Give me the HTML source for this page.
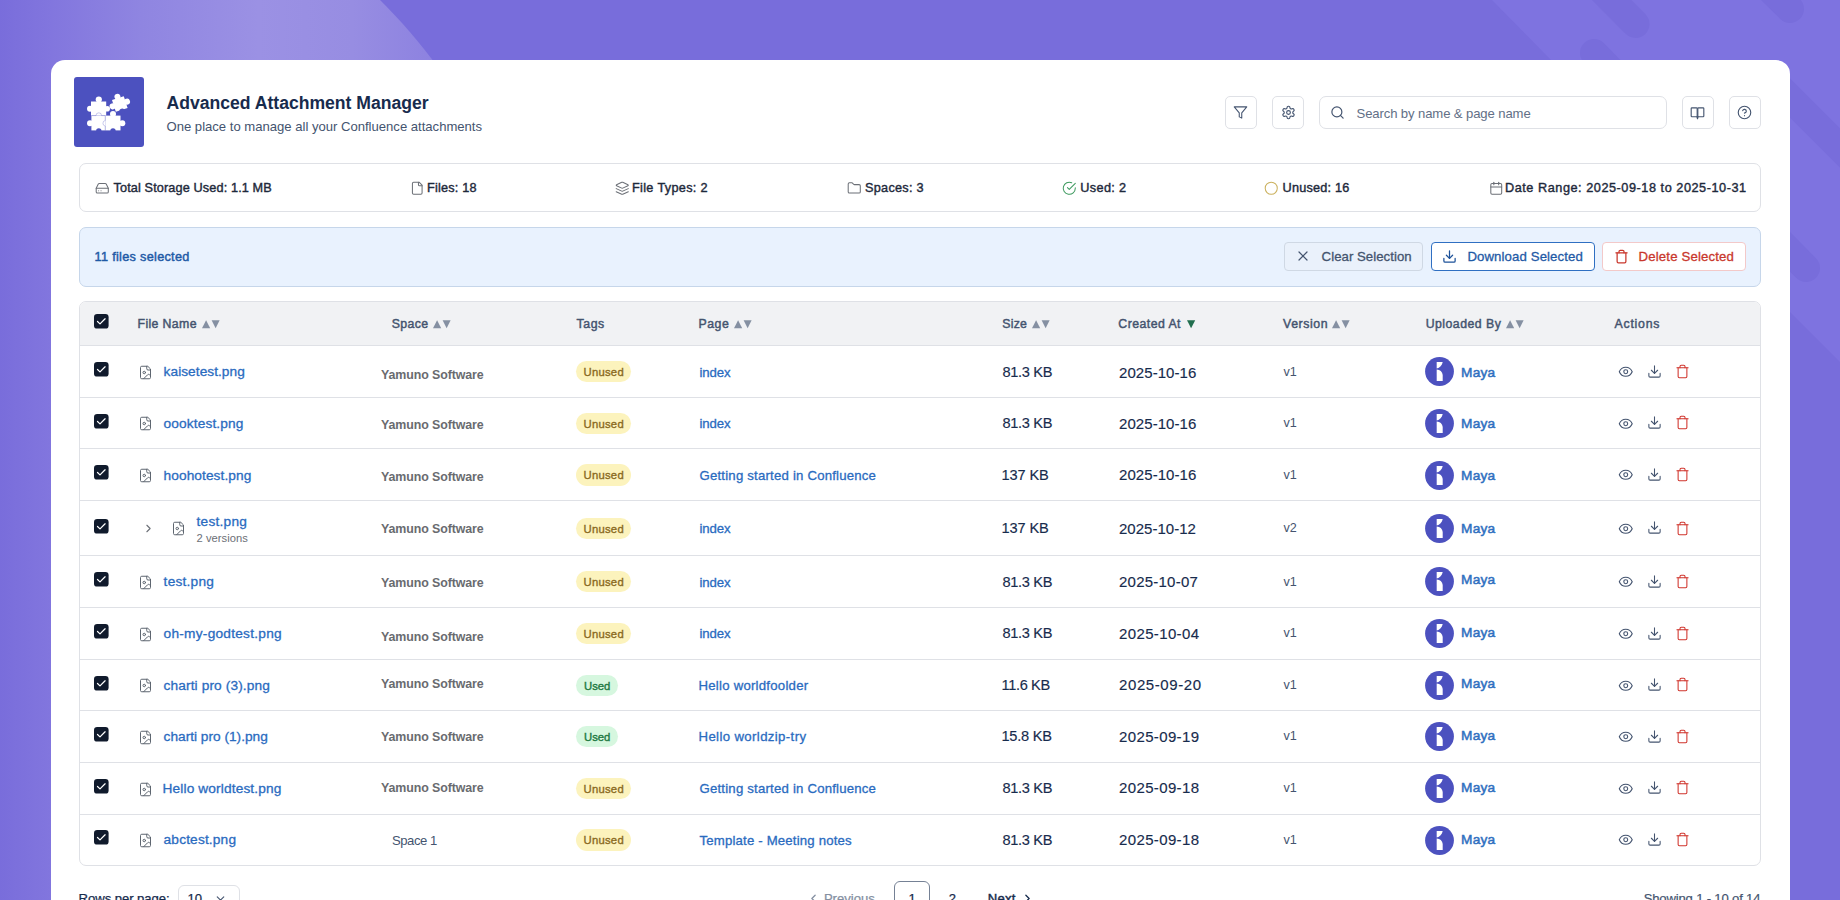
<!DOCTYPE html>
<html><head><meta charset="utf-8"><title>Advanced Attachment Manager</title>
<style>
html,body{margin:0;padding:0;width:1840px;height:900px;overflow:hidden;background:#786ddb;}
body{position:relative;font-family:"Liberation Sans", sans-serif;}
.t{position:absolute;white-space:nowrap;}
.b{position:absolute;}
.ic{position:absolute;overflow:visible;}
</style></head><body>
<svg class="ic" style="left:0;top:0" width="1840" height="900" viewBox="0 0 1840 900">
<defs>
<linearGradient id="lg" x1="0" y1="0" x2="470" y2="0" gradientUnits="userSpaceOnUse">
<stop offset="0" stop-color="#796ddb"/><stop offset="0.11" stop-color="#8276de"/><stop offset="0.3" stop-color="#8f85e1"/><stop offset="0.55" stop-color="#9b91e4"/><stop offset="0.75" stop-color="#978de2"/><stop offset="0.92" stop-color="#8d82e0"/><stop offset="1" stop-color="#8a7fdf"/>
</linearGradient>
</defs>
<rect width="1840" height="900" fill="#786ddb"/>
<path d="M0 0 H380 C400 20 418 40 440 70 L470 130 L60 900 L0 900 Z" fill="url(#lg)"/>
<path d="M1492 0 H1840 V362 L1790 312 L1551 60 Z" fill="#7e73e0"/>
<g stroke="#786ddb" stroke-width="28" stroke-linecap="round">
<line x1="1562" y1="-50" x2="1635.5" y2="24"/>
<line x1="1594" y1="53" x2="1806" y2="268"/>
<line x1="1700" y1="-80" x2="1790" y2="9"/>
<line x1="1766" y1="74" x2="1900" y2="208"/>
</g>
</svg>
<div class="b" style="left:51.00px;top:60.00px;width:1739.00px;height:900.00px;background:#fff;border-radius:14px 14px 0 0;"></div>
<div class="b" style="left:73.60px;top:76.50px;width:70.20px;height:70.00px;background:#4c51bf;border-radius:3px;"></div>
<svg class="ic" style="left:73.8px;top:76.5px" width="70" height="70" viewBox="0 0 70 70">
<g fill="#fff">
<rect x="17" y="24.5" width="15.2" height="14.1"/><circle cx="24.8" cy="22.6" r="3.1"/><circle cx="16" cy="31.8" r="3"/><circle cx="33.2" cy="31.8" r="2.8"/>
<rect x="17.4" y="38.6" width="13.8" height="14.8"/><circle cx="16" cy="46.2" r="3"/>
<rect x="31.2" y="38.6" width="15.3" height="14.8"/><circle cx="39" cy="37" r="3"/><circle cx="48.3" cy="46.2" r="3"/>
<g transform="rotate(-18 45.8 27)"><rect x="39.6" y="20.8" width="12.4" height="12.4"/><circle cx="45.8" cy="19.4" r="3"/><circle cx="53.4" cy="27" r="3"/><circle cx="38.2" cy="27" r="3"/></g>
</g>
<g fill="#4c51bf"><circle cx="24.8" cy="54" r="2.7"/><circle cx="39" cy="54" r="2.7"/><g transform="rotate(-18 45.8 27)"><circle cx="45.8" cy="34.6" r="2.7"/></g></g>
<g fill="none" stroke="#4c51bf" stroke-width="0.5" opacity="0.6"><path d="M17.4 38.6 H22 A2.8 2.8 0 0 1 27.6 38.6 H31.2 V43.5 A2.8 2.8 0 0 0 31.2 49 V53.4"/></g>
</svg>
<div class="t" style="left:166.60px;top:94.60px;font-size:17.6px;line-height:17.6px;color:#172b4d;font-weight:700;letter-spacing:-0.013px;">Advanced Attachment Manager</div>
<div class="t" style="left:166.50px;top:119.61px;font-size:13.1px;line-height:13.1px;color:#44546f;font-weight:400;letter-spacing:-0.007px;">One place to manage all your Confluence attachments</div>
<div class="b" style="left:1225.00px;top:96.00px;width:32.00px;height:32.50px;background:#fff;border:1px solid #dfe1e6;border-radius:5px;box-sizing:border-box;"></div>
<svg class="ic" style="left:1233.30px;top:105.20px;" width="15" height="15" viewBox="0 0 24 24" fill="none" stroke="#44546f" stroke-width="1.7" stroke-linecap="round" stroke-linejoin="round"><polygon points="22 3 2 3 10 12.46 10 19 14 21 14 12.46 22 3"/></svg>
<div class="b" style="left:1272.00px;top:96.00px;width:32.00px;height:32.50px;background:#fff;border:1px solid #dfe1e6;border-radius:5px;box-sizing:border-box;"></div>
<svg class="ic" style="left:1280.50px;top:104.50px;" width="15" height="15" viewBox="0 0 24 24" fill="none" stroke="#44546f" stroke-width="1.8" stroke-linecap="round" stroke-linejoin="round"><path d="M12.22 2h-.44a2 2 0 0 0-2 2v.18a2 2 0 0 1-1 1.73l-.43.25a2 2 0 0 1-2 0l-.15-.08a2 2 0 0 0-2.73.73l-.22.38a2 2 0 0 0 .73 2.73l.15.1a2 2 0 0 1 1 1.72v.51a2 2 0 0 1-1 1.74l-.15.09a2 2 0 0 0-.73 2.73l.22.38a2 2 0 0 0 2.73.73l.15-.08a2 2 0 0 1 2 0l.43.25a2 2 0 0 1 1 1.730V20a2 2 0 0 0 2 2h.44a2 2 0 0 0 2-2v-.18a2 2 0 0 1 1-1.73l.43-.25a2 2 0 0 1 2 0l.15.08a2 2 0 0 0 2.73-.73l.22-.39a2 2 0 0 0-.73-2.73l-.15-.08a2 2 0 0 1-1-1.74v-.5a2 2 0 0 1 1-1.74l.15-.09a2 2 0 0 0 .73-2.73l-.22-.38a2 2 0 0 0-2.73-.73l-.15.08a2 2 0 0 1-2 0l-.43-.25a2 2 0 0 1-1-1.73V4a2 2 0 0 0-2-2z"/><circle cx="12" cy="12" r="3"/></svg>
<div class="b" style="left:1319.00px;top:96.00px;width:347.50px;height:32.50px;background:#fff;border:1px solid #dfe1e6;border-radius:5px;box-sizing:border-box;border-radius:7px;"></div>
<svg class="ic" style="left:1329.60px;top:105.00px;" width="15" height="15" viewBox="0 0 24 24" fill="none" stroke="#44546f" stroke-width="1.9" stroke-linecap="round" stroke-linejoin="round"><circle cx="11" cy="11" r="8"/><path d="m21 21-4.3-4.3"/></svg>
<div class="t" style="left:1356.50px;top:106.71px;font-size:13.1px;line-height:13.1px;color:#626f86;font-weight:400;letter-spacing:-0.108px;">Search by name &amp; page name</div>
<div class="b" style="left:1682.00px;top:96.00px;width:32.00px;height:32.50px;background:#fff;border:1px solid #dfe1e6;border-radius:5px;box-sizing:border-box;"></div>
<svg class="ic" style="left:1690.30px;top:105.00px;color:#44546f;" width="15" height="15" viewBox="0 0 24 24" fill="none" stroke="#44546f" stroke-width="1.8" stroke-linecap="round" stroke-linejoin="round"><rect x="1.9" y="4.5" width="9.6" height="14.2" rx="1.2"/><rect x="12.5" y="4.5" width="9.6" height="14.2" rx="1.2"/><path d="M12 18.7 11.2 19.6 12 22 12.8 19.6Z" fill="currentColor"/></svg>
<div class="b" style="left:1729.00px;top:96.00px;width:32.00px;height:32.50px;background:#fff;border:1px solid #dfe1e6;border-radius:5px;box-sizing:border-box;"></div>
<svg class="ic" style="left:1737.10px;top:105.40px;" width="15" height="15" viewBox="0 0 24 24" fill="none" stroke="#44546f" stroke-width="1.8" stroke-linecap="round" stroke-linejoin="round"><circle cx="12" cy="12" r="10"/><path d="M9.09 9a3 3 0 0 1 5.83 1c0 2-3 3-3 3"/><path d="M12 17h.01"/></svg>
<div class="b" style="left:79.00px;top:163.00px;width:1682.00px;height:49.00px;border:1px solid #dfe1e6;border-radius:7px;box-sizing:border-box;"></div>
<svg class="ic" style="left:95.10px;top:180.50px;" width="14.5" height="14.5" viewBox="0 0 24 24" fill="none" stroke="#6b6f76" stroke-width="1.7" stroke-linecap="round" stroke-linejoin="round"><line x1="22" x2="2" y1="12" y2="12"/><path d="M5.45 5.11 2 12v6a2 2 0 0 0 2 2h16a2 2 0 0 0 2-2v-6l-3.45-6.89A2 2 0 0 0 16.76 4H7.24a2 2 0 0 0-1.79 1.11z"/><line x1="6" x2="6.01" y1="16" y2="16"/><line x1="10" x2="10.01" y1="16" y2="16"/></svg>
<div class="t" style="left:113.50px;top:182.15px;font-size:12.7px;line-height:12.7px;color:#1e293b;font-weight:400;letter-spacing:0.125px;-webkit-text-stroke:0.4px #1e293b;">Total Storage Used: 1.1 MB</div>
<svg class="ic" style="left:410.10px;top:180.50px;" width="14.5" height="14.5" viewBox="0 0 24 24" fill="none" stroke="#6b6f76" stroke-width="1.7" stroke-linecap="round" stroke-linejoin="round"><path d="M15 2H6a2 2 0 0 0-2 2v16a2 2 0 0 0 2 2h12a2 2 0 0 0 2-2V7Z"/><path d="M14 2v4a2 2 0 0 0 2 2h4"/></svg>
<div class="t" style="left:427.00px;top:182.15px;font-size:12.7px;line-height:12.7px;color:#1e293b;font-weight:400;letter-spacing:0.201px;-webkit-text-stroke:0.4px #1e293b;">Files: 18</div>
<svg class="ic" style="left:615.10px;top:180.50px;" width="14.5" height="14.5" viewBox="0 0 24 24" fill="none" stroke="#6b6f76" stroke-width="1.7" stroke-linecap="round" stroke-linejoin="round"><path d="m12.83 2.18a2 2 0 0 0-1.66 0L2.6 6.08a1 1 0 0 0 0 1.83l8.58 3.91a2 2 0 0 0 1.66 0l8.58-3.9a1 1 0 0 0 0-1.83Z"/><path d="m22 17.65-9.17 4.16a2 2 0 0 1-1.66 0L2 17.65"/><path d="m22 12.65-9.17 4.16a2 2 0 0 1-1.66 0L2 12.65"/></svg>
<div class="t" style="left:632.00px;top:182.15px;font-size:12.7px;line-height:12.7px;color:#1e293b;font-weight:400;letter-spacing:0.328px;-webkit-text-stroke:0.4px #1e293b;">File Types: 2</div>
<svg class="ic" style="left:846.60px;top:180.50px;" width="14.5" height="14.5" viewBox="0 0 24 24" fill="none" stroke="#6b6f76" stroke-width="1.7" stroke-linecap="round" stroke-linejoin="round"><path d="M20 20a2 2 0 0 0 2-2V8a2 2 0 0 0-2-2h-7.9a2 2 0 0 1-1.69-.9L9.6 3.9A2 2 0 0 0 7.93 3H4a2 2 0 0 0-2 2v13a2 2 0 0 0 2 2Z"/></svg>
<div class="t" style="left:865.00px;top:182.15px;font-size:12.7px;line-height:12.7px;color:#1e293b;font-weight:400;letter-spacing:0.279px;-webkit-text-stroke:0.4px #1e293b;">Spaces: 3</div>
<svg class="ic" style="left:1062.10px;top:180.50px;" width="14.5" height="14.5" viewBox="0 0 24 24" fill="none" stroke="#3e9a5f" stroke-width="1.7" stroke-linecap="round" stroke-linejoin="round"><path d="M22 11.08V12a10 10 0 1 1-5.93-9.14"/><path d="m9 11 3 3L22 4"/></svg>
<div class="t" style="left:1080.30px;top:182.15px;font-size:12.7px;line-height:12.7px;color:#1e293b;font-weight:400;letter-spacing:0.339px;-webkit-text-stroke:0.4px #1e293b;">Used: 2</div>
<svg class="ic" style="left:1264.10px;top:180.50px;" width="14.5" height="14.5" viewBox="0 0 24 24" fill="none" stroke="#cbb15e" stroke-width="1.7" stroke-linecap="round" stroke-linejoin="round"><circle cx="12" cy="12" r="10"/></svg>
<div class="t" style="left:1282.60px;top:182.15px;font-size:12.7px;line-height:12.7px;color:#1e293b;font-weight:400;letter-spacing:0.196px;-webkit-text-stroke:0.4px #1e293b;">Unused: 16</div>
<svg class="ic" style="left:1488.60px;top:180.50px;" width="14.5" height="14.5" viewBox="0 0 24 24" fill="none" stroke="#6b6f76" stroke-width="1.7" stroke-linecap="round" stroke-linejoin="round"><rect width="18" height="18" x="3" y="4" rx="2" ry="2"/><line x1="16" x2="16" y1="2" y2="6"/><line x1="8" x2="8" y1="2" y2="6"/><line x1="3" x2="21" y1="10" y2="10"/></svg>
<div class="t" style="left:1505.00px;top:182.15px;font-size:12.7px;line-height:12.7px;color:#1e293b;font-weight:400;letter-spacing:0.539px;-webkit-text-stroke:0.4px #1e293b;">Date Range: 2025-09-18 to 2025-10-31</div>
<div class="b" style="left:79.00px;top:227.00px;width:1682.00px;height:60.00px;background:#e9f2fe;border:1px solid #c6d6ea;border-radius:7px;box-sizing:border-box;"></div>
<div class="t" style="left:94.60px;top:251.05px;font-size:12.7px;line-height:12.7px;color:#1f5aa6;font-weight:400;letter-spacing:0.295px;-webkit-text-stroke:0.45px #1f5aa6;">11 files selected</div>
<div class="b" style="left:1284.00px;top:242.00px;width:139.00px;height:28.50px;background:#eaf1fb;border:1px solid #cfd8e4;border-radius:4px;box-sizing:border-box;"></div>
<svg class="ic" style="left:1294.60px;top:248.30px;" width="16" height="16" viewBox="0 0 24 24" fill="none" stroke="#44546f" stroke-width="1.8" stroke-linecap="round" stroke-linejoin="round"><path d="M18 6 6 18"/><path d="m6 6 12 12"/></svg>
<div class="t" style="left:1321.60px;top:249.83px;font-size:13.2px;line-height:13.2px;color:#44546f;font-weight:400;letter-spacing:0.043px;-webkit-text-stroke:0.3px #44546f;">Clear Selection</div>
<div class="b" style="left:1430.50px;top:242.00px;width:164.50px;height:28.50px;background:#fff;border:1px solid #2f6fc2;border-radius:4px;box-sizing:border-box;"></div>
<svg class="ic" style="left:1441.50px;top:249.00px;" width="15" height="15" viewBox="0 0 24 24" fill="none" stroke="#1d5199" stroke-width="2" stroke-linecap="round" stroke-linejoin="round"><path d="M21 15v4a2 2 0 0 1-2 2H5a2 2 0 0 1-2-2v-4"/><polyline points="7 10 12 15 17 10"/><line x1="12" x2="12" y1="15" y2="3"/></svg>
<div class="t" style="left:1467.40px;top:249.83px;font-size:13.2px;line-height:13.2px;color:#1f5aa6;font-weight:400;letter-spacing:0.113px;-webkit-text-stroke:0.3px #1f5aa6;">Download Selected</div>
<div class="b" style="left:1602.00px;top:242.00px;width:144.00px;height:28.50px;background:#fff;border:1px solid #f3c9c9;border-radius:4px;box-sizing:border-box;"></div>
<svg class="ic" style="left:1613.50px;top:249.00px;" width="15" height="15" viewBox="0 0 24 24" fill="none" stroke="#c9372c" stroke-width="2" stroke-linecap="round" stroke-linejoin="round"><path d="M3 6h18"/><path d="M19 6v14c0 1-1 2-2 2H7c-1 0-2-1-2-2V6"/><path d="M8 6V4c0-1 1-2 2-2h4c1 0 2 1 2 2v2"/></svg>
<div class="t" style="left:1638.60px;top:249.83px;font-size:13.2px;line-height:13.2px;color:#c9372c;font-weight:400;letter-spacing:0.159px;-webkit-text-stroke:0.3px #c9372c;">Delete Selected</div>
<div class="b" style="left:79.00px;top:301.00px;width:1682.00px;height:565.00px;border:1px solid #dfe1e6;border-radius:7px;box-sizing:border-box;overflow:hidden;"></div>
<div class="b" style="left:80.00px;top:302.00px;width:1680.00px;height:44.00px;background:#f1f2f4;border-radius:6px 6px 0 0;"></div>
<div class="b" style="left:80.00px;top:345.00px;width:1680.00px;height:1.00px;background:#dfe1e6;"></div>
<div class="b" style="left:80.00px;top:397.00px;width:1680.00px;height:1.00px;background:#dfe1e6;"></div>
<div class="b" style="left:80.00px;top:448.00px;width:1680.00px;height:1.00px;background:#dfe1e6;"></div>
<div class="b" style="left:80.00px;top:500.00px;width:1680.00px;height:1.00px;background:#dfe1e6;"></div>
<div class="b" style="left:80.00px;top:555.00px;width:1680.00px;height:1.00px;background:#dfe1e6;"></div>
<div class="b" style="left:80.00px;top:607.00px;width:1680.00px;height:1.00px;background:#dfe1e6;"></div>
<div class="b" style="left:80.00px;top:659.00px;width:1680.00px;height:1.00px;background:#dfe1e6;"></div>
<div class="b" style="left:80.00px;top:710.00px;width:1680.00px;height:1.00px;background:#dfe1e6;"></div>
<div class="b" style="left:80.00px;top:762.00px;width:1680.00px;height:1.00px;background:#dfe1e6;"></div>
<div class="b" style="left:80.00px;top:814.00px;width:1680.00px;height:1.00px;background:#dfe1e6;"></div>
<svg class="ic" style="left:94.4px;top:314px" width="15" height="15" viewBox="0 0 15 15"><rect x="0" y="0" width="14.6" height="14.6" rx="3.2" fill="#101a2c"/><path d="M3.5 7.5 6 9.9 11.1 4.8" fill="none" stroke="#fff" stroke-width="1.25" stroke-linecap="round" stroke-linejoin="round"/></svg>
<div class="t" style="left:137.50px;top:318.29px;font-size:12.3px;line-height:12.3px;color:#44546f;font-weight:400;letter-spacing:0.376px;-webkit-text-stroke:0.45px #44546f;">File Name</div>
<svg class="ic" style="left:201.6px;top:319.7px" width="19" height="9" viewBox="0 0 19 9"><path d="M4.1 0.2 8.2 8.2 H0 Z" fill="#8590a2"/><path d="M9.6 0.3 H17.6 L13.6 8.3 Z" fill="#8590a2"/></svg>
<div class="t" style="left:391.80px;top:318.29px;font-size:12.3px;line-height:12.3px;color:#44546f;font-weight:400;letter-spacing:0.368px;-webkit-text-stroke:0.45px #44546f;">Space</div>
<svg class="ic" style="left:433px;top:319.7px" width="19" height="9" viewBox="0 0 19 9"><path d="M4.1 0.2 8.2 8.2 H0 Z" fill="#8590a2"/><path d="M9.6 0.3 H17.6 L13.6 8.3 Z" fill="#8590a2"/></svg>
<div class="t" style="left:576.60px;top:318.29px;font-size:12.3px;line-height:12.3px;color:#44546f;font-weight:400;letter-spacing:0.525px;-webkit-text-stroke:0.45px #44546f;">Tags</div>
<div class="t" style="left:698.50px;top:318.29px;font-size:12.3px;line-height:12.3px;color:#44546f;font-weight:400;letter-spacing:0.540px;-webkit-text-stroke:0.45px #44546f;">Page</div>
<svg class="ic" style="left:733.7px;top:319.7px" width="19" height="9" viewBox="0 0 19 9"><path d="M4.1 0.2 8.2 8.2 H0 Z" fill="#8590a2"/><path d="M9.6 0.3 H17.6 L13.6 8.3 Z" fill="#8590a2"/></svg>
<div class="t" style="left:1002.30px;top:318.29px;font-size:12.3px;line-height:12.3px;color:#44546f;font-weight:400;letter-spacing:0.206px;-webkit-text-stroke:0.45px #44546f;">Size</div>
<svg class="ic" style="left:1031.6px;top:319.7px" width="19" height="9" viewBox="0 0 19 9"><path d="M4.1 0.2 8.2 8.2 H0 Z" fill="#8590a2"/><path d="M9.6 0.3 H17.6 L13.6 8.3 Z" fill="#8590a2"/></svg>
<div class="t" style="left:1118.30px;top:318.29px;font-size:12.3px;line-height:12.3px;color:#44546f;font-weight:400;letter-spacing:0.459px;-webkit-text-stroke:0.45px #44546f;">Created At</div>
<div class="t" style="left:1283.00px;top:318.29px;font-size:12.3px;line-height:12.3px;color:#44546f;font-weight:400;letter-spacing:0.604px;-webkit-text-stroke:0.45px #44546f;">Version</div>
<svg class="ic" style="left:1332.2px;top:319.7px" width="19" height="9" viewBox="0 0 19 9"><path d="M4.1 0.2 8.2 8.2 H0 Z" fill="#8590a2"/><path d="M9.6 0.3 H17.6 L13.6 8.3 Z" fill="#8590a2"/></svg>
<div class="t" style="left:1425.70px;top:318.29px;font-size:12.3px;line-height:12.3px;color:#44546f;font-weight:400;letter-spacing:0.474px;-webkit-text-stroke:0.45px #44546f;">Uploaded By</div>
<svg class="ic" style="left:1506.1px;top:319.7px" width="19" height="9" viewBox="0 0 19 9"><path d="M4.1 0.2 8.2 8.2 H0 Z" fill="#8590a2"/><path d="M9.6 0.3 H17.6 L13.6 8.3 Z" fill="#8590a2"/></svg>
<div class="t" style="left:1614.60px;top:318.29px;font-size:12.3px;line-height:12.3px;color:#44546f;font-weight:400;letter-spacing:0.754px;-webkit-text-stroke:0.45px #44546f;">Actions</div>
<svg class="ic" style="left:1186.7px;top:319.7px" width="9" height="9" viewBox="0 0 9 9"><path d="M0 0.3 H8.2 L4.1 8.2 Z" fill="#216e4e"/></svg>
<svg class="ic" style="left:94.4px;top:361.8px" width="15" height="15" viewBox="0 0 15 15"><rect x="0" y="0" width="14.6" height="14.6" rx="3.2" fill="#101a2c"/><path d="M3.5 7.5 6 9.9 11.1 4.8" fill="none" stroke="#fff" stroke-width="1.25" stroke-linecap="round" stroke-linejoin="round"/></svg>
<svg class="ic" style="left:138.20px;top:364.70px;" width="15" height="15" viewBox="0 0 24 24" fill="none" stroke="#5e6670" stroke-width="1.6" stroke-linecap="round" stroke-linejoin="round"><path d="M15 2H6a2 2 0 0 0-2 2v16a2 2 0 0 0 2 2h12a2 2 0 0 0 2-2V7Z"/><path d="M14 2v4a2 2 0 0 0 2 2h4"/><circle cx="10" cy="12" r="2"/><path d="m20 17-1.296-1.296a2.41 2.41 0 0 0-3.408 0L9 22"/></svg>
<div class="t" style="left:163.60px;top:365.30px;font-size:13.7px;line-height:13.7px;color:#2a6bbf;font-weight:400;letter-spacing:0.046px;-webkit-text-stroke:0.3px #2a6bbf;">kaisetest.png</div>
<div class="t" style="left:381.00px;top:369.20px;font-size:12.4px;line-height:12.4px;color:#696b6f;font-weight:700;letter-spacing:-0.091px;">Yamuno Software</div>
<div class="b" style="left:576.00px;top:360.90px;width:54.50px;height:21.20px;background:#fcf3bd;border-radius:11px;"></div>
<div class="t" style="left:583.50px;top:366.93px;font-size:11.3px;line-height:11.3px;color:#8a6a1f;font-weight:400;letter-spacing:0.249px;-webkit-text-stroke:0.35px #8a6a1f;">Unused</div>
<div class="t" style="left:699.50px;top:366.23px;font-size:13.2px;line-height:13.2px;color:#2a6bbf;font-weight:400;letter-spacing:-0.108px;-webkit-text-stroke:0.3px #2a6bbf;">index</div>
<div class="t" style="left:1002.50px;top:365.04px;font-size:14.6px;line-height:14.6px;color:#172b4d;font-weight:400;letter-spacing:-0.332px;-webkit-text-stroke:0.15px #172b4d;">81.3 KB</div>
<div class="t" style="left:1119.00px;top:364.70px;font-size:15px;line-height:15px;color:#172b4d;font-weight:400;letter-spacing:0.068px;-webkit-text-stroke:0.15px #172b4d;">2025-10-16</div>
<div class="t" style="left:1283.50px;top:366.13px;font-size:12.6px;line-height:12.6px;color:#44546f;font-weight:400;">v1</div>
<svg class="ic" style="left:1425.3px;top:357.10px" width="29" height="29" viewBox="0 0 29 29"><circle cx="14.5" cy="14.5" r="14.4" fill="#4c51bf"/><path d="M11.7 4.9 H17.7 C17 8.4 14.8 10.8 11.7 11.6 Z" fill="#fff"/><path d="M11.7 12.6 C15 12.9 17.3 14.8 17.7 18 V24 H11.7 Z" fill="#fff"/></svg>
<div class="t" style="left:1461.00px;top:365.80px;font-size:13.7px;line-height:13.7px;color:#2f6fc0;font-weight:400;letter-spacing:0.247px;-webkit-text-stroke:0.5px #2f6fc0;">Maya</div>
<svg class="ic" style="left:1617.80px;top:363.90px;" width="15.5" height="15.5" viewBox="0 0 24 24" fill="none" stroke="#44546f" stroke-width="1.7" stroke-linecap="round" stroke-linejoin="round"><path d="M2 12s3-7 10-7 10 7 10 7-3 7-10 7-10-7-10-7Z"/><circle cx="12" cy="12" r="3"/></svg>
<svg class="ic" style="left:1646.60px;top:363.50px;" width="15" height="15" viewBox="0 0 24 24" fill="none" stroke="#44546f" stroke-width="1.7" stroke-linecap="round" stroke-linejoin="round"><path d="M21 15v4a2 2 0 0 1-2 2H5a2 2 0 0 1-2-2v-4"/><polyline points="7 10 12 15 17 10"/><line x1="12" x2="12" y1="15" y2="3"/></svg>
<svg class="ic" style="left:1675.30px;top:363.60px;" width="15" height="15" viewBox="0 0 24 24" fill="none" stroke="#d0342c" stroke-width="1.7" stroke-linecap="round" stroke-linejoin="round"><path d="M3 6h18"/><path d="M19 6v14c0 1-1 2-2 2H7c-1 0-2-1-2-2V6"/><path d="M8 6V4c0-1 1-2 2-2h4c1 0 2 1 2 2v2"/></svg>
<svg class="ic" style="left:94.4px;top:413.5px" width="15" height="15" viewBox="0 0 15 15"><rect x="0" y="0" width="14.6" height="14.6" rx="3.2" fill="#101a2c"/><path d="M3.5 7.5 6 9.9 11.1 4.8" fill="none" stroke="#fff" stroke-width="1.25" stroke-linecap="round" stroke-linejoin="round"/></svg>
<svg class="ic" style="left:138.20px;top:416.40px;" width="15" height="15" viewBox="0 0 24 24" fill="none" stroke="#5e6670" stroke-width="1.6" stroke-linecap="round" stroke-linejoin="round"><path d="M15 2H6a2 2 0 0 0-2 2v16a2 2 0 0 0 2 2h12a2 2 0 0 0 2-2V7Z"/><path d="M14 2v4a2 2 0 0 0 2 2h4"/><circle cx="10" cy="12" r="2"/><path d="m20 17-1.296-1.296a2.41 2.41 0 0 0-3.408 0L9 22"/></svg>
<div class="t" style="left:163.60px;top:417.10px;font-size:13.7px;line-height:13.7px;color:#2a6bbf;font-weight:400;letter-spacing:0.121px;-webkit-text-stroke:0.3px #2a6bbf;">oooktest.png</div>
<div class="t" style="left:381.00px;top:419.30px;font-size:12.4px;line-height:12.4px;color:#696b6f;font-weight:700;letter-spacing:-0.091px;">Yamuno Software</div>
<div class="b" style="left:576.00px;top:412.60px;width:54.50px;height:21.20px;background:#fcf3bd;border-radius:11px;"></div>
<div class="t" style="left:583.50px;top:418.63px;font-size:11.3px;line-height:11.3px;color:#8a6a1f;font-weight:400;letter-spacing:0.249px;-webkit-text-stroke:0.35px #8a6a1f;">Unused</div>
<div class="t" style="left:699.50px;top:417.43px;font-size:13.2px;line-height:13.2px;color:#2a6bbf;font-weight:400;letter-spacing:-0.108px;-webkit-text-stroke:0.3px #2a6bbf;">index</div>
<div class="t" style="left:1002.50px;top:416.24px;font-size:14.6px;line-height:14.6px;color:#172b4d;font-weight:400;letter-spacing:-0.332px;-webkit-text-stroke:0.15px #172b4d;">81.3 KB</div>
<div class="t" style="left:1119.00px;top:415.90px;font-size:15px;line-height:15px;color:#172b4d;font-weight:400;letter-spacing:0.068px;-webkit-text-stroke:0.15px #172b4d;">2025-10-16</div>
<div class="t" style="left:1283.50px;top:417.33px;font-size:12.6px;line-height:12.6px;color:#44546f;font-weight:400;">v1</div>
<svg class="ic" style="left:1425.3px;top:408.80px" width="29" height="29" viewBox="0 0 29 29"><circle cx="14.5" cy="14.5" r="14.4" fill="#4c51bf"/><path d="M11.7 4.9 H17.7 C17 8.4 14.8 10.8 11.7 11.6 Z" fill="#fff"/><path d="M11.7 12.6 C15 12.9 17.3 14.8 17.7 18 V24 H11.7 Z" fill="#fff"/></svg>
<div class="t" style="left:1461.00px;top:417.30px;font-size:13.7px;line-height:13.7px;color:#2f6fc0;font-weight:400;letter-spacing:0.247px;-webkit-text-stroke:0.5px #2f6fc0;">Maya</div>
<svg class="ic" style="left:1617.80px;top:415.60px;" width="15.5" height="15.5" viewBox="0 0 24 24" fill="none" stroke="#44546f" stroke-width="1.7" stroke-linecap="round" stroke-linejoin="round"><path d="M2 12s3-7 10-7 10 7 10 7-3 7-10 7-10-7-10-7Z"/><circle cx="12" cy="12" r="3"/></svg>
<svg class="ic" style="left:1646.60px;top:415.20px;" width="15" height="15" viewBox="0 0 24 24" fill="none" stroke="#44546f" stroke-width="1.7" stroke-linecap="round" stroke-linejoin="round"><path d="M21 15v4a2 2 0 0 1-2 2H5a2 2 0 0 1-2-2v-4"/><polyline points="7 10 12 15 17 10"/><line x1="12" x2="12" y1="15" y2="3"/></svg>
<svg class="ic" style="left:1675.30px;top:415.30px;" width="15" height="15" viewBox="0 0 24 24" fill="none" stroke="#d0342c" stroke-width="1.7" stroke-linecap="round" stroke-linejoin="round"><path d="M3 6h18"/><path d="M19 6v14c0 1-1 2-2 2H7c-1 0-2-1-2-2V6"/><path d="M8 6V4c0-1 1-2 2-2h4c1 0 2 1 2 2v2"/></svg>
<svg class="ic" style="left:94.4px;top:465.3px" width="15" height="15" viewBox="0 0 15 15"><rect x="0" y="0" width="14.6" height="14.6" rx="3.2" fill="#101a2c"/><path d="M3.5 7.5 6 9.9 11.1 4.8" fill="none" stroke="#fff" stroke-width="1.25" stroke-linecap="round" stroke-linejoin="round"/></svg>
<svg class="ic" style="left:138.20px;top:468.20px;" width="15" height="15" viewBox="0 0 24 24" fill="none" stroke="#5e6670" stroke-width="1.6" stroke-linecap="round" stroke-linejoin="round"><path d="M15 2H6a2 2 0 0 0-2 2v16a2 2 0 0 0 2 2h12a2 2 0 0 0 2-2V7Z"/><path d="M14 2v4a2 2 0 0 0 2 2h4"/><circle cx="10" cy="12" r="2"/><path d="m20 17-1.296-1.296a2.41 2.41 0 0 0-3.408 0L9 22"/></svg>
<div class="t" style="left:163.60px;top:468.60px;font-size:13.7px;line-height:13.7px;color:#2a6bbf;font-weight:400;letter-spacing:0.079px;-webkit-text-stroke:0.3px #2a6bbf;">hoohotest.png</div>
<div class="t" style="left:381.00px;top:470.80px;font-size:12.4px;line-height:12.4px;color:#696b6f;font-weight:700;letter-spacing:-0.091px;">Yamuno Software</div>
<div class="b" style="left:576.00px;top:464.40px;width:54.50px;height:21.20px;background:#fcf3bd;border-radius:11px;"></div>
<div class="t" style="left:583.50px;top:470.43px;font-size:11.3px;line-height:11.3px;color:#8a6a1f;font-weight:400;letter-spacing:0.249px;-webkit-text-stroke:0.35px #8a6a1f;">Unused</div>
<div class="t" style="left:699.50px;top:468.93px;font-size:13.2px;line-height:13.2px;color:#2a6bbf;font-weight:400;letter-spacing:0.201px;-webkit-text-stroke:0.3px #2a6bbf;">Getting started in Confluence</div>
<div class="t" style="left:1001.50px;top:467.74px;font-size:14.6px;line-height:14.6px;color:#172b4d;font-weight:400;letter-spacing:-0.128px;-webkit-text-stroke:0.15px #172b4d;">137 KB</div>
<div class="t" style="left:1119.00px;top:467.40px;font-size:15px;line-height:15px;color:#172b4d;font-weight:400;letter-spacing:0.068px;-webkit-text-stroke:0.15px #172b4d;">2025-10-16</div>
<div class="t" style="left:1283.50px;top:468.83px;font-size:12.6px;line-height:12.6px;color:#44546f;font-weight:400;">v1</div>
<svg class="ic" style="left:1425.3px;top:460.60px" width="29" height="29" viewBox="0 0 29 29"><circle cx="14.5" cy="14.5" r="14.4" fill="#4c51bf"/><path d="M11.7 4.9 H17.7 C17 8.4 14.8 10.8 11.7 11.6 Z" fill="#fff"/><path d="M11.7 12.6 C15 12.9 17.3 14.8 17.7 18 V24 H11.7 Z" fill="#fff"/></svg>
<div class="t" style="left:1461.00px;top:468.80px;font-size:13.7px;line-height:13.7px;color:#2f6fc0;font-weight:400;letter-spacing:0.247px;-webkit-text-stroke:0.5px #2f6fc0;">Maya</div>
<svg class="ic" style="left:1617.80px;top:467.40px;" width="15.5" height="15.5" viewBox="0 0 24 24" fill="none" stroke="#44546f" stroke-width="1.7" stroke-linecap="round" stroke-linejoin="round"><path d="M2 12s3-7 10-7 10 7 10 7-3 7-10 7-10-7-10-7Z"/><circle cx="12" cy="12" r="3"/></svg>
<svg class="ic" style="left:1646.60px;top:467.00px;" width="15" height="15" viewBox="0 0 24 24" fill="none" stroke="#44546f" stroke-width="1.7" stroke-linecap="round" stroke-linejoin="round"><path d="M21 15v4a2 2 0 0 1-2 2H5a2 2 0 0 1-2-2v-4"/><polyline points="7 10 12 15 17 10"/><line x1="12" x2="12" y1="15" y2="3"/></svg>
<svg class="ic" style="left:1675.30px;top:467.10px;" width="15" height="15" viewBox="0 0 24 24" fill="none" stroke="#d0342c" stroke-width="1.7" stroke-linecap="round" stroke-linejoin="round"><path d="M3 6h18"/><path d="M19 6v14c0 1-1 2-2 2H7c-1 0-2-1-2-2V6"/><path d="M8 6V4c0-1 1-2 2-2h4c1 0 2 1 2 2v2"/></svg>
<svg class="ic" style="left:94.4px;top:518.7px" width="15" height="15" viewBox="0 0 15 15"><rect x="0" y="0" width="14.6" height="14.6" rx="3.2" fill="#101a2c"/><path d="M3.5 7.5 6 9.9 11.1 4.8" fill="none" stroke="#fff" stroke-width="1.25" stroke-linecap="round" stroke-linejoin="round"/></svg>
<svg class="ic" style="left:142.20px;top:522.10px;" width="13" height="13" viewBox="0 0 24 24" fill="none" stroke="#6b6f76" stroke-width="2" stroke-linecap="round" stroke-linejoin="round"><path d="m9 18 6-6-6-6"/></svg>
<svg class="ic" style="left:171.00px;top:521.00px;" width="15" height="15" viewBox="0 0 24 24" fill="none" stroke="#5e6670" stroke-width="1.6" stroke-linecap="round" stroke-linejoin="round"><path d="M15 2H6a2 2 0 0 0-2 2v16a2 2 0 0 0 2 2h12a2 2 0 0 0 2-2V7Z"/><path d="M14 2v4a2 2 0 0 0 2 2h4"/><circle cx="10" cy="12" r="2"/><path d="m20 17-1.296-1.296a2.41 2.41 0 0 0-3.408 0L9 22"/></svg>
<div class="t" style="left:196.50px;top:514.80px;font-size:13.7px;line-height:13.7px;color:#2a6bbf;font-weight:400;letter-spacing:0.244px;-webkit-text-stroke:0.3px #2a6bbf;">test.png</div>
<div class="t" style="left:196.50px;top:532.92px;font-size:11.2px;line-height:11.2px;color:#6b6f76;font-weight:400;letter-spacing:0.045px;">2 versions</div>
<div class="t" style="left:381.00px;top:522.90px;font-size:12.4px;line-height:12.4px;color:#696b6f;font-weight:700;letter-spacing:-0.091px;">Yamuno Software</div>
<div class="b" style="left:576.00px;top:517.80px;width:54.50px;height:21.20px;background:#fcf3bd;border-radius:11px;"></div>
<div class="t" style="left:583.50px;top:523.83px;font-size:11.3px;line-height:11.3px;color:#8a6a1f;font-weight:400;letter-spacing:0.249px;-webkit-text-stroke:0.35px #8a6a1f;">Unused</div>
<div class="t" style="left:699.50px;top:522.23px;font-size:13.2px;line-height:13.2px;color:#2a6bbf;font-weight:400;letter-spacing:-0.108px;-webkit-text-stroke:0.3px #2a6bbf;">index</div>
<div class="t" style="left:1001.50px;top:521.04px;font-size:14.6px;line-height:14.6px;color:#172b4d;font-weight:400;letter-spacing:-0.128px;-webkit-text-stroke:0.15px #172b4d;">137 KB</div>
<div class="t" style="left:1119.00px;top:520.70px;font-size:15px;line-height:15px;color:#172b4d;font-weight:400;letter-spacing:0.013px;-webkit-text-stroke:0.15px #172b4d;">2025-10-12</div>
<div class="t" style="left:1283.50px;top:522.13px;font-size:12.6px;line-height:12.6px;color:#44546f;font-weight:400;">v2</div>
<svg class="ic" style="left:1425.3px;top:514.00px" width="29" height="29" viewBox="0 0 29 29"><circle cx="14.5" cy="14.5" r="14.4" fill="#4c51bf"/><path d="M11.7 4.9 H17.7 C17 8.4 14.8 10.8 11.7 11.6 Z" fill="#fff"/><path d="M11.7 12.6 C15 12.9 17.3 14.8 17.7 18 V24 H11.7 Z" fill="#fff"/></svg>
<div class="t" style="left:1461.00px;top:521.80px;font-size:13.7px;line-height:13.7px;color:#2f6fc0;font-weight:400;letter-spacing:0.247px;-webkit-text-stroke:0.5px #2f6fc0;">Maya</div>
<svg class="ic" style="left:1617.80px;top:520.80px;" width="15.5" height="15.5" viewBox="0 0 24 24" fill="none" stroke="#44546f" stroke-width="1.7" stroke-linecap="round" stroke-linejoin="round"><path d="M2 12s3-7 10-7 10 7 10 7-3 7-10 7-10-7-10-7Z"/><circle cx="12" cy="12" r="3"/></svg>
<svg class="ic" style="left:1646.60px;top:520.40px;" width="15" height="15" viewBox="0 0 24 24" fill="none" stroke="#44546f" stroke-width="1.7" stroke-linecap="round" stroke-linejoin="round"><path d="M21 15v4a2 2 0 0 1-2 2H5a2 2 0 0 1-2-2v-4"/><polyline points="7 10 12 15 17 10"/><line x1="12" x2="12" y1="15" y2="3"/></svg>
<svg class="ic" style="left:1675.30px;top:520.50px;" width="15" height="15" viewBox="0 0 24 24" fill="none" stroke="#d0342c" stroke-width="1.7" stroke-linecap="round" stroke-linejoin="round"><path d="M3 6h18"/><path d="M19 6v14c0 1-1 2-2 2H7c-1 0-2-1-2-2V6"/><path d="M8 6V4c0-1 1-2 2-2h4c1 0 2 1 2 2v2"/></svg>
<svg class="ic" style="left:94.4px;top:571.9px" width="15" height="15" viewBox="0 0 15 15"><rect x="0" y="0" width="14.6" height="14.6" rx="3.2" fill="#101a2c"/><path d="M3.5 7.5 6 9.9 11.1 4.8" fill="none" stroke="#fff" stroke-width="1.25" stroke-linecap="round" stroke-linejoin="round"/></svg>
<svg class="ic" style="left:138.20px;top:574.80px;" width="15" height="15" viewBox="0 0 24 24" fill="none" stroke="#5e6670" stroke-width="1.6" stroke-linecap="round" stroke-linejoin="round"><path d="M15 2H6a2 2 0 0 0-2 2v16a2 2 0 0 0 2 2h12a2 2 0 0 0 2-2V7Z"/><path d="M14 2v4a2 2 0 0 0 2 2h4"/><circle cx="10" cy="12" r="2"/><path d="m20 17-1.296-1.296a2.41 2.41 0 0 0-3.408 0L9 22"/></svg>
<div class="t" style="left:163.60px;top:575.20px;font-size:13.7px;line-height:13.7px;color:#2a6bbf;font-weight:400;letter-spacing:0.230px;-webkit-text-stroke:0.3px #2a6bbf;">test.png</div>
<div class="t" style="left:381.00px;top:576.80px;font-size:12.4px;line-height:12.4px;color:#696b6f;font-weight:700;letter-spacing:-0.091px;">Yamuno Software</div>
<div class="b" style="left:576.00px;top:571.00px;width:54.50px;height:21.20px;background:#fcf3bd;border-radius:11px;"></div>
<div class="t" style="left:583.50px;top:577.03px;font-size:11.3px;line-height:11.3px;color:#8a6a1f;font-weight:400;letter-spacing:0.249px;-webkit-text-stroke:0.35px #8a6a1f;">Unused</div>
<div class="t" style="left:699.50px;top:575.83px;font-size:13.2px;line-height:13.2px;color:#2a6bbf;font-weight:400;letter-spacing:-0.108px;-webkit-text-stroke:0.3px #2a6bbf;">index</div>
<div class="t" style="left:1002.50px;top:574.64px;font-size:14.6px;line-height:14.6px;color:#172b4d;font-weight:400;letter-spacing:-0.332px;-webkit-text-stroke:0.15px #172b4d;">81.3 KB</div>
<div class="t" style="left:1119.00px;top:574.30px;font-size:15px;line-height:15px;color:#172b4d;font-weight:400;letter-spacing:0.235px;-webkit-text-stroke:0.15px #172b4d;">2025-10-07</div>
<div class="t" style="left:1283.50px;top:575.73px;font-size:12.6px;line-height:12.6px;color:#44546f;font-weight:400;">v1</div>
<svg class="ic" style="left:1425.3px;top:567.20px" width="29" height="29" viewBox="0 0 29 29"><circle cx="14.5" cy="14.5" r="14.4" fill="#4c51bf"/><path d="M11.7 4.9 H17.7 C17 8.4 14.8 10.8 11.7 11.6 Z" fill="#fff"/><path d="M11.7 12.6 C15 12.9 17.3 14.8 17.7 18 V24 H11.7 Z" fill="#fff"/></svg>
<div class="t" style="left:1461.00px;top:573.30px;font-size:13.7px;line-height:13.7px;color:#2f6fc0;font-weight:400;letter-spacing:0.247px;-webkit-text-stroke:0.5px #2f6fc0;">Maya</div>
<svg class="ic" style="left:1617.80px;top:574.00px;" width="15.5" height="15.5" viewBox="0 0 24 24" fill="none" stroke="#44546f" stroke-width="1.7" stroke-linecap="round" stroke-linejoin="round"><path d="M2 12s3-7 10-7 10 7 10 7-3 7-10 7-10-7-10-7Z"/><circle cx="12" cy="12" r="3"/></svg>
<svg class="ic" style="left:1646.60px;top:573.60px;" width="15" height="15" viewBox="0 0 24 24" fill="none" stroke="#44546f" stroke-width="1.7" stroke-linecap="round" stroke-linejoin="round"><path d="M21 15v4a2 2 0 0 1-2 2H5a2 2 0 0 1-2-2v-4"/><polyline points="7 10 12 15 17 10"/><line x1="12" x2="12" y1="15" y2="3"/></svg>
<svg class="ic" style="left:1675.30px;top:573.70px;" width="15" height="15" viewBox="0 0 24 24" fill="none" stroke="#d0342c" stroke-width="1.7" stroke-linecap="round" stroke-linejoin="round"><path d="M3 6h18"/><path d="M19 6v14c0 1-1 2-2 2H7c-1 0-2-1-2-2V6"/><path d="M8 6V4c0-1 1-2 2-2h4c1 0 2 1 2 2v2"/></svg>
<svg class="ic" style="left:94.4px;top:623.8px" width="15" height="15" viewBox="0 0 15 15"><rect x="0" y="0" width="14.6" height="14.6" rx="3.2" fill="#101a2c"/><path d="M3.5 7.5 6 9.9 11.1 4.8" fill="none" stroke="#fff" stroke-width="1.25" stroke-linecap="round" stroke-linejoin="round"/></svg>
<svg class="ic" style="left:138.20px;top:626.70px;" width="15" height="15" viewBox="0 0 24 24" fill="none" stroke="#5e6670" stroke-width="1.6" stroke-linecap="round" stroke-linejoin="round"><path d="M15 2H6a2 2 0 0 0-2 2v16a2 2 0 0 0 2 2h12a2 2 0 0 0 2-2V7Z"/><path d="M14 2v4a2 2 0 0 0 2 2h4"/><circle cx="10" cy="12" r="2"/><path d="m20 17-1.296-1.296a2.41 2.41 0 0 0-3.408 0L9 22"/></svg>
<div class="t" style="left:163.60px;top:627.10px;font-size:13.7px;line-height:13.7px;color:#2a6bbf;font-weight:400;letter-spacing:0.243px;-webkit-text-stroke:0.3px #2a6bbf;">oh-my-godtest.png</div>
<div class="t" style="left:381.00px;top:631.30px;font-size:12.4px;line-height:12.4px;color:#696b6f;font-weight:700;letter-spacing:-0.091px;">Yamuno Software</div>
<div class="b" style="left:576.00px;top:622.90px;width:54.50px;height:21.20px;background:#fcf3bd;border-radius:11px;"></div>
<div class="t" style="left:583.50px;top:628.93px;font-size:11.3px;line-height:11.3px;color:#8a6a1f;font-weight:400;letter-spacing:0.249px;-webkit-text-stroke:0.35px #8a6a1f;">Unused</div>
<div class="t" style="left:699.50px;top:627.43px;font-size:13.2px;line-height:13.2px;color:#2a6bbf;font-weight:400;letter-spacing:-0.108px;-webkit-text-stroke:0.3px #2a6bbf;">index</div>
<div class="t" style="left:1002.50px;top:626.24px;font-size:14.6px;line-height:14.6px;color:#172b4d;font-weight:400;letter-spacing:-0.332px;-webkit-text-stroke:0.15px #172b4d;">81.3 KB</div>
<div class="t" style="left:1119.00px;top:625.90px;font-size:15px;line-height:15px;color:#172b4d;font-weight:400;letter-spacing:0.368px;-webkit-text-stroke:0.15px #172b4d;">2025-10-04</div>
<div class="t" style="left:1283.50px;top:627.33px;font-size:12.6px;line-height:12.6px;color:#44546f;font-weight:400;">v1</div>
<svg class="ic" style="left:1425.3px;top:619.10px" width="29" height="29" viewBox="0 0 29 29"><circle cx="14.5" cy="14.5" r="14.4" fill="#4c51bf"/><path d="M11.7 4.9 H17.7 C17 8.4 14.8 10.8 11.7 11.6 Z" fill="#fff"/><path d="M11.7 12.6 C15 12.9 17.3 14.8 17.7 18 V24 H11.7 Z" fill="#fff"/></svg>
<div class="t" style="left:1461.00px;top:625.80px;font-size:13.7px;line-height:13.7px;color:#2f6fc0;font-weight:400;letter-spacing:0.247px;-webkit-text-stroke:0.5px #2f6fc0;">Maya</div>
<svg class="ic" style="left:1617.80px;top:625.90px;" width="15.5" height="15.5" viewBox="0 0 24 24" fill="none" stroke="#44546f" stroke-width="1.7" stroke-linecap="round" stroke-linejoin="round"><path d="M2 12s3-7 10-7 10 7 10 7-3 7-10 7-10-7-10-7Z"/><circle cx="12" cy="12" r="3"/></svg>
<svg class="ic" style="left:1646.60px;top:625.50px;" width="15" height="15" viewBox="0 0 24 24" fill="none" stroke="#44546f" stroke-width="1.7" stroke-linecap="round" stroke-linejoin="round"><path d="M21 15v4a2 2 0 0 1-2 2H5a2 2 0 0 1-2-2v-4"/><polyline points="7 10 12 15 17 10"/><line x1="12" x2="12" y1="15" y2="3"/></svg>
<svg class="ic" style="left:1675.30px;top:625.60px;" width="15" height="15" viewBox="0 0 24 24" fill="none" stroke="#d0342c" stroke-width="1.7" stroke-linecap="round" stroke-linejoin="round"><path d="M3 6h18"/><path d="M19 6v14c0 1-1 2-2 2H7c-1 0-2-1-2-2V6"/><path d="M8 6V4c0-1 1-2 2-2h4c1 0 2 1 2 2v2"/></svg>
<svg class="ic" style="left:94.4px;top:675.5px" width="15" height="15" viewBox="0 0 15 15"><rect x="0" y="0" width="14.6" height="14.6" rx="3.2" fill="#101a2c"/><path d="M3.5 7.5 6 9.9 11.1 4.8" fill="none" stroke="#fff" stroke-width="1.25" stroke-linecap="round" stroke-linejoin="round"/></svg>
<svg class="ic" style="left:138.20px;top:678.40px;" width="15" height="15" viewBox="0 0 24 24" fill="none" stroke="#5e6670" stroke-width="1.6" stroke-linecap="round" stroke-linejoin="round"><path d="M15 2H6a2 2 0 0 0-2 2v16a2 2 0 0 0 2 2h12a2 2 0 0 0 2-2V7Z"/><path d="M14 2v4a2 2 0 0 0 2 2h4"/><circle cx="10" cy="12" r="2"/><path d="m20 17-1.296-1.296a2.41 2.41 0 0 0-3.408 0L9 22"/></svg>
<div class="t" style="left:163.60px;top:678.60px;font-size:13.7px;line-height:13.7px;color:#2a6bbf;font-weight:400;letter-spacing:0.117px;-webkit-text-stroke:0.3px #2a6bbf;">charti pro (3).png</div>
<div class="t" style="left:381.00px;top:677.80px;font-size:12.4px;line-height:12.4px;color:#696b6f;font-weight:700;letter-spacing:-0.091px;">Yamuno Software</div>
<div class="b" style="left:576.00px;top:674.60px;width:42.00px;height:21.20px;background:#d6f7df;border-radius:11px;"></div>
<div class="t" style="left:584.10px;top:680.63px;font-size:11.3px;line-height:11.3px;color:#1f7a43;font-weight:400;letter-spacing:-0.063px;-webkit-text-stroke:0.4px #1f7a43;">Used</div>
<div class="t" style="left:698.50px;top:678.93px;font-size:13.2px;line-height:13.2px;color:#2a6bbf;font-weight:400;letter-spacing:0.238px;-webkit-text-stroke:0.3px #2a6bbf;">Hello worldfoolder</div>
<div class="t" style="left:1001.50px;top:677.74px;font-size:14.6px;line-height:14.6px;color:#172b4d;font-weight:400;letter-spacing:-0.351px;-webkit-text-stroke:0.15px #172b4d;">11.6 KB</div>
<div class="t" style="left:1119.00px;top:677.40px;font-size:15px;line-height:15px;color:#172b4d;font-weight:400;letter-spacing:0.602px;-webkit-text-stroke:0.15px #172b4d;">2025-09-20</div>
<div class="t" style="left:1283.50px;top:678.83px;font-size:12.6px;line-height:12.6px;color:#44546f;font-weight:400;">v1</div>
<svg class="ic" style="left:1425.3px;top:670.80px" width="29" height="29" viewBox="0 0 29 29"><circle cx="14.5" cy="14.5" r="14.4" fill="#4c51bf"/><path d="M11.7 4.9 H17.7 C17 8.4 14.8 10.8 11.7 11.6 Z" fill="#fff"/><path d="M11.7 12.6 C15 12.9 17.3 14.8 17.7 18 V24 H11.7 Z" fill="#fff"/></svg>
<div class="t" style="left:1461.00px;top:677.30px;font-size:13.7px;line-height:13.7px;color:#2f6fc0;font-weight:400;letter-spacing:0.247px;-webkit-text-stroke:0.5px #2f6fc0;">Maya</div>
<svg class="ic" style="left:1617.80px;top:677.60px;" width="15.5" height="15.5" viewBox="0 0 24 24" fill="none" stroke="#44546f" stroke-width="1.7" stroke-linecap="round" stroke-linejoin="round"><path d="M2 12s3-7 10-7 10 7 10 7-3 7-10 7-10-7-10-7Z"/><circle cx="12" cy="12" r="3"/></svg>
<svg class="ic" style="left:1646.60px;top:677.20px;" width="15" height="15" viewBox="0 0 24 24" fill="none" stroke="#44546f" stroke-width="1.7" stroke-linecap="round" stroke-linejoin="round"><path d="M21 15v4a2 2 0 0 1-2 2H5a2 2 0 0 1-2-2v-4"/><polyline points="7 10 12 15 17 10"/><line x1="12" x2="12" y1="15" y2="3"/></svg>
<svg class="ic" style="left:1675.30px;top:677.30px;" width="15" height="15" viewBox="0 0 24 24" fill="none" stroke="#d0342c" stroke-width="1.7" stroke-linecap="round" stroke-linejoin="round"><path d="M3 6h18"/><path d="M19 6v14c0 1-1 2-2 2H7c-1 0-2-1-2-2V6"/><path d="M8 6V4c0-1 1-2 2-2h4c1 0 2 1 2 2v2"/></svg>
<svg class="ic" style="left:94.4px;top:726.9px" width="15" height="15" viewBox="0 0 15 15"><rect x="0" y="0" width="14.6" height="14.6" rx="3.2" fill="#101a2c"/><path d="M3.5 7.5 6 9.9 11.1 4.8" fill="none" stroke="#fff" stroke-width="1.25" stroke-linecap="round" stroke-linejoin="round"/></svg>
<svg class="ic" style="left:138.20px;top:729.80px;" width="15" height="15" viewBox="0 0 24 24" fill="none" stroke="#5e6670" stroke-width="1.6" stroke-linecap="round" stroke-linejoin="round"><path d="M15 2H6a2 2 0 0 0-2 2v16a2 2 0 0 0 2 2h12a2 2 0 0 0 2-2V7Z"/><path d="M14 2v4a2 2 0 0 0 2 2h4"/><circle cx="10" cy="12" r="2"/><path d="m20 17-1.296-1.296a2.41 2.41 0 0 0-3.408 0L9 22"/></svg>
<div class="t" style="left:163.60px;top:730.10px;font-size:13.7px;line-height:13.7px;color:#2a6bbf;font-weight:400;-webkit-text-stroke:0.3px #2a6bbf;">charti pro (1).png</div>
<div class="t" style="left:381.00px;top:730.50px;font-size:12.4px;line-height:12.4px;color:#696b6f;font-weight:700;letter-spacing:-0.091px;">Yamuno Software</div>
<div class="b" style="left:576.00px;top:726.00px;width:42.00px;height:21.20px;background:#d6f7df;border-radius:11px;"></div>
<div class="t" style="left:584.10px;top:732.03px;font-size:11.3px;line-height:11.3px;color:#1f7a43;font-weight:400;letter-spacing:-0.063px;-webkit-text-stroke:0.4px #1f7a43;">Used</div>
<div class="t" style="left:698.50px;top:730.43px;font-size:13.2px;line-height:13.2px;color:#2a6bbf;font-weight:400;letter-spacing:0.374px;-webkit-text-stroke:0.3px #2a6bbf;">Hello worldzip-try</div>
<div class="t" style="left:1001.50px;top:729.24px;font-size:14.6px;line-height:14.6px;color:#172b4d;font-weight:400;letter-spacing:-0.249px;-webkit-text-stroke:0.15px #172b4d;">15.8 KB</div>
<div class="t" style="left:1119.00px;top:728.90px;font-size:15px;line-height:15px;color:#172b4d;font-weight:400;letter-spacing:0.368px;-webkit-text-stroke:0.15px #172b4d;">2025-09-19</div>
<div class="t" style="left:1283.50px;top:730.33px;font-size:12.6px;line-height:12.6px;color:#44546f;font-weight:400;">v1</div>
<svg class="ic" style="left:1425.3px;top:722.20px" width="29" height="29" viewBox="0 0 29 29"><circle cx="14.5" cy="14.5" r="14.4" fill="#4c51bf"/><path d="M11.7 4.9 H17.7 C17 8.4 14.8 10.8 11.7 11.6 Z" fill="#fff"/><path d="M11.7 12.6 C15 12.9 17.3 14.8 17.7 18 V24 H11.7 Z" fill="#fff"/></svg>
<div class="t" style="left:1461.00px;top:728.80px;font-size:13.7px;line-height:13.7px;color:#2f6fc0;font-weight:400;letter-spacing:0.247px;-webkit-text-stroke:0.5px #2f6fc0;">Maya</div>
<svg class="ic" style="left:1617.80px;top:729.00px;" width="15.5" height="15.5" viewBox="0 0 24 24" fill="none" stroke="#44546f" stroke-width="1.7" stroke-linecap="round" stroke-linejoin="round"><path d="M2 12s3-7 10-7 10 7 10 7-3 7-10 7-10-7-10-7Z"/><circle cx="12" cy="12" r="3"/></svg>
<svg class="ic" style="left:1646.60px;top:728.60px;" width="15" height="15" viewBox="0 0 24 24" fill="none" stroke="#44546f" stroke-width="1.7" stroke-linecap="round" stroke-linejoin="round"><path d="M21 15v4a2 2 0 0 1-2 2H5a2 2 0 0 1-2-2v-4"/><polyline points="7 10 12 15 17 10"/><line x1="12" x2="12" y1="15" y2="3"/></svg>
<svg class="ic" style="left:1675.30px;top:728.70px;" width="15" height="15" viewBox="0 0 24 24" fill="none" stroke="#d0342c" stroke-width="1.7" stroke-linecap="round" stroke-linejoin="round"><path d="M3 6h18"/><path d="M19 6v14c0 1-1 2-2 2H7c-1 0-2-1-2-2V6"/><path d="M8 6V4c0-1 1-2 2-2h4c1 0 2 1 2 2v2"/></svg>
<svg class="ic" style="left:94.4px;top:778.6px" width="15" height="15" viewBox="0 0 15 15"><rect x="0" y="0" width="14.6" height="14.6" rx="3.2" fill="#101a2c"/><path d="M3.5 7.5 6 9.9 11.1 4.8" fill="none" stroke="#fff" stroke-width="1.25" stroke-linecap="round" stroke-linejoin="round"/></svg>
<svg class="ic" style="left:138.20px;top:781.50px;" width="15" height="15" viewBox="0 0 24 24" fill="none" stroke="#5e6670" stroke-width="1.6" stroke-linecap="round" stroke-linejoin="round"><path d="M15 2H6a2 2 0 0 0-2 2v16a2 2 0 0 0 2 2h12a2 2 0 0 0 2-2V7Z"/><path d="M14 2v4a2 2 0 0 0 2 2h4"/><circle cx="10" cy="12" r="2"/><path d="m20 17-1.296-1.296a2.41 2.41 0 0 0-3.408 0L9 22"/></svg>
<div class="t" style="left:162.60px;top:781.60px;font-size:13.7px;line-height:13.7px;color:#2a6bbf;font-weight:400;letter-spacing:0.128px;-webkit-text-stroke:0.3px #2a6bbf;">Hello worldtest.png</div>
<div class="t" style="left:381.00px;top:782.30px;font-size:12.4px;line-height:12.4px;color:#696b6f;font-weight:700;letter-spacing:-0.091px;">Yamuno Software</div>
<div class="b" style="left:576.00px;top:777.70px;width:54.50px;height:21.20px;background:#fcf3bd;border-radius:11px;"></div>
<div class="t" style="left:583.50px;top:783.73px;font-size:11.3px;line-height:11.3px;color:#8a6a1f;font-weight:400;letter-spacing:0.249px;-webkit-text-stroke:0.35px #8a6a1f;">Unused</div>
<div class="t" style="left:699.50px;top:781.93px;font-size:13.2px;line-height:13.2px;color:#2a6bbf;font-weight:400;letter-spacing:0.201px;-webkit-text-stroke:0.3px #2a6bbf;">Getting started in Confluence</div>
<div class="t" style="left:1002.50px;top:780.74px;font-size:14.6px;line-height:14.6px;color:#172b4d;font-weight:400;letter-spacing:-0.332px;-webkit-text-stroke:0.15px #172b4d;">81.3 KB</div>
<div class="t" style="left:1119.00px;top:780.40px;font-size:15px;line-height:15px;color:#172b4d;font-weight:400;letter-spacing:0.368px;-webkit-text-stroke:0.15px #172b4d;">2025-09-18</div>
<div class="t" style="left:1283.50px;top:781.83px;font-size:12.6px;line-height:12.6px;color:#44546f;font-weight:400;">v1</div>
<svg class="ic" style="left:1425.3px;top:773.90px" width="29" height="29" viewBox="0 0 29 29"><circle cx="14.5" cy="14.5" r="14.4" fill="#4c51bf"/><path d="M11.7 4.9 H17.7 C17 8.4 14.8 10.8 11.7 11.6 Z" fill="#fff"/><path d="M11.7 12.6 C15 12.9 17.3 14.8 17.7 18 V24 H11.7 Z" fill="#fff"/></svg>
<div class="t" style="left:1461.00px;top:781.20px;font-size:13.7px;line-height:13.7px;color:#2f6fc0;font-weight:400;letter-spacing:0.247px;-webkit-text-stroke:0.5px #2f6fc0;">Maya</div>
<svg class="ic" style="left:1617.80px;top:780.70px;" width="15.5" height="15.5" viewBox="0 0 24 24" fill="none" stroke="#44546f" stroke-width="1.7" stroke-linecap="round" stroke-linejoin="round"><path d="M2 12s3-7 10-7 10 7 10 7-3 7-10 7-10-7-10-7Z"/><circle cx="12" cy="12" r="3"/></svg>
<svg class="ic" style="left:1646.60px;top:780.30px;" width="15" height="15" viewBox="0 0 24 24" fill="none" stroke="#44546f" stroke-width="1.7" stroke-linecap="round" stroke-linejoin="round"><path d="M21 15v4a2 2 0 0 1-2 2H5a2 2 0 0 1-2-2v-4"/><polyline points="7 10 12 15 17 10"/><line x1="12" x2="12" y1="15" y2="3"/></svg>
<svg class="ic" style="left:1675.30px;top:780.40px;" width="15" height="15" viewBox="0 0 24 24" fill="none" stroke="#d0342c" stroke-width="1.7" stroke-linecap="round" stroke-linejoin="round"><path d="M3 6h18"/><path d="M19 6v14c0 1-1 2-2 2H7c-1 0-2-1-2-2V6"/><path d="M8 6V4c0-1 1-2 2-2h4c1 0 2 1 2 2v2"/></svg>
<svg class="ic" style="left:94.4px;top:830.3px" width="15" height="15" viewBox="0 0 15 15"><rect x="0" y="0" width="14.6" height="14.6" rx="3.2" fill="#101a2c"/><path d="M3.5 7.5 6 9.9 11.1 4.8" fill="none" stroke="#fff" stroke-width="1.25" stroke-linecap="round" stroke-linejoin="round"/></svg>
<svg class="ic" style="left:138.20px;top:833.20px;" width="15" height="15" viewBox="0 0 24 24" fill="none" stroke="#5e6670" stroke-width="1.6" stroke-linecap="round" stroke-linejoin="round"><path d="M15 2H6a2 2 0 0 0-2 2v16a2 2 0 0 0 2 2h12a2 2 0 0 0 2-2V7Z"/><path d="M14 2v4a2 2 0 0 0 2 2h4"/><circle cx="10" cy="12" r="2"/><path d="m20 17-1.296-1.296a2.41 2.41 0 0 0-3.408 0L9 22"/></svg>
<div class="t" style="left:163.60px;top:833.10px;font-size:13.7px;line-height:13.7px;color:#2a6bbf;font-weight:400;letter-spacing:0.164px;-webkit-text-stroke:0.3px #2a6bbf;">abctest.png</div>
<div class="t" style="left:392.00px;top:833.91px;font-size:13.1px;line-height:13.1px;color:#44546f;font-weight:400;letter-spacing:-0.461px;">Space 1</div>
<div class="b" style="left:576.00px;top:829.40px;width:54.50px;height:21.20px;background:#fcf3bd;border-radius:11px;"></div>
<div class="t" style="left:583.50px;top:835.43px;font-size:11.3px;line-height:11.3px;color:#8a6a1f;font-weight:400;letter-spacing:0.249px;-webkit-text-stroke:0.35px #8a6a1f;">Unused</div>
<div class="t" style="left:699.50px;top:833.73px;font-size:13.2px;line-height:13.2px;color:#2a6bbf;font-weight:400;letter-spacing:0.175px;-webkit-text-stroke:0.3px #2a6bbf;">Template - Meeting notes</div>
<div class="t" style="left:1002.50px;top:832.54px;font-size:14.6px;line-height:14.6px;color:#172b4d;font-weight:400;letter-spacing:-0.332px;-webkit-text-stroke:0.15px #172b4d;">81.3 KB</div>
<div class="t" style="left:1119.00px;top:832.20px;font-size:15px;line-height:15px;color:#172b4d;font-weight:400;letter-spacing:0.368px;-webkit-text-stroke:0.15px #172b4d;">2025-09-18</div>
<div class="t" style="left:1283.50px;top:833.63px;font-size:12.6px;line-height:12.6px;color:#44546f;font-weight:400;">v1</div>
<svg class="ic" style="left:1425.3px;top:825.60px" width="29" height="29" viewBox="0 0 29 29"><circle cx="14.5" cy="14.5" r="14.4" fill="#4c51bf"/><path d="M11.7 4.9 H17.7 C17 8.4 14.8 10.8 11.7 11.6 Z" fill="#fff"/><path d="M11.7 12.6 C15 12.9 17.3 14.8 17.7 18 V24 H11.7 Z" fill="#fff"/></svg>
<div class="t" style="left:1461.00px;top:832.70px;font-size:13.7px;line-height:13.7px;color:#2f6fc0;font-weight:400;letter-spacing:0.247px;-webkit-text-stroke:0.5px #2f6fc0;">Maya</div>
<svg class="ic" style="left:1617.80px;top:832.40px;" width="15.5" height="15.5" viewBox="0 0 24 24" fill="none" stroke="#44546f" stroke-width="1.7" stroke-linecap="round" stroke-linejoin="round"><path d="M2 12s3-7 10-7 10 7 10 7-3 7-10 7-10-7-10-7Z"/><circle cx="12" cy="12" r="3"/></svg>
<svg class="ic" style="left:1646.60px;top:832.00px;" width="15" height="15" viewBox="0 0 24 24" fill="none" stroke="#44546f" stroke-width="1.7" stroke-linecap="round" stroke-linejoin="round"><path d="M21 15v4a2 2 0 0 1-2 2H5a2 2 0 0 1-2-2v-4"/><polyline points="7 10 12 15 17 10"/><line x1="12" x2="12" y1="15" y2="3"/></svg>
<svg class="ic" style="left:1675.30px;top:832.10px;" width="15" height="15" viewBox="0 0 24 24" fill="none" stroke="#d0342c" stroke-width="1.7" stroke-linecap="round" stroke-linejoin="round"><path d="M3 6h18"/><path d="M19 6v14c0 1-1 2-2 2H7c-1 0-2-1-2-2V6"/><path d="M8 6V4c0-1 1-2 2-2h4c1 0 2 1 2 2v2"/></svg>
<div class="t" style="left:78.60px;top:892.41px;font-size:13.1px;line-height:13.1px;color:#172b4d;font-weight:400;letter-spacing:-0.052px;-webkit-text-stroke:0.25px #172b4d;">Rows per page:</div>
<div class="b" style="left:177.50px;top:884.50px;width:62.00px;height:34.00px;border:1px solid #dfe1e6;border-radius:6px;box-sizing:border-box;"></div>
<div class="t" style="left:187.50px;top:892.41px;font-size:13.1px;line-height:13.1px;color:#172b4d;font-weight:400;-webkit-text-stroke:0.25px #172b4d;">10</div>
<svg class="ic" style="left:214.30px;top:892.00px;" width="13" height="13" viewBox="0 0 24 24" fill="none" stroke="#44546f" stroke-width="2" stroke-linecap="round" stroke-linejoin="round"><path d="m6 9 6 6 6-6"/></svg>
<svg class="ic" style="left:806.50px;top:892.00px;" width="13" height="13" viewBox="0 0 24 24" fill="none" stroke="#8590a2" stroke-width="2.4" stroke-linecap="round" stroke-linejoin="round"><path d="m15 18-6-6 6-6"/></svg>
<div class="t" style="left:823.90px;top:892.41px;font-size:13.1px;line-height:13.1px;color:#8590a2;font-weight:400;-webkit-text-stroke:0.25px #8590a2;">Previous</div>
<div class="b" style="left:894.00px;top:881.00px;width:36.00px;height:36.00px;border:1px solid #758195;border-radius:6px;box-sizing:border-box;"></div>
<div class="t" style="left:908.60px;top:892.41px;font-size:13.1px;line-height:13.1px;color:#172b4d;font-weight:400;-webkit-text-stroke:0.25px #172b4d;">1</div>
<div class="t" style="left:948.70px;top:892.41px;font-size:13.1px;line-height:13.1px;color:#172b4d;font-weight:400;-webkit-text-stroke:0.25px #172b4d;">2</div>
<div class="t" style="left:987.70px;top:892.41px;font-size:13.1px;line-height:13.1px;color:#172b4d;font-weight:400;letter-spacing:0.238px;-webkit-text-stroke:0.45px #172b4d;">Next</div>
<svg class="ic" style="left:1021.00px;top:892.00px;" width="13" height="13" viewBox="0 0 24 24" fill="none" stroke="#172b4d" stroke-width="2.4" stroke-linecap="round" stroke-linejoin="round"><path d="m9 18 6-6-6-6"/></svg>
<div class="t" style="left:1643.70px;top:892.41px;font-size:13.1px;line-height:13.1px;color:#44546f;font-weight:400;letter-spacing:-0.175px;-webkit-text-stroke:0.2px #44546f;">Showing 1 - 10 of 14</div>
</body></html>
